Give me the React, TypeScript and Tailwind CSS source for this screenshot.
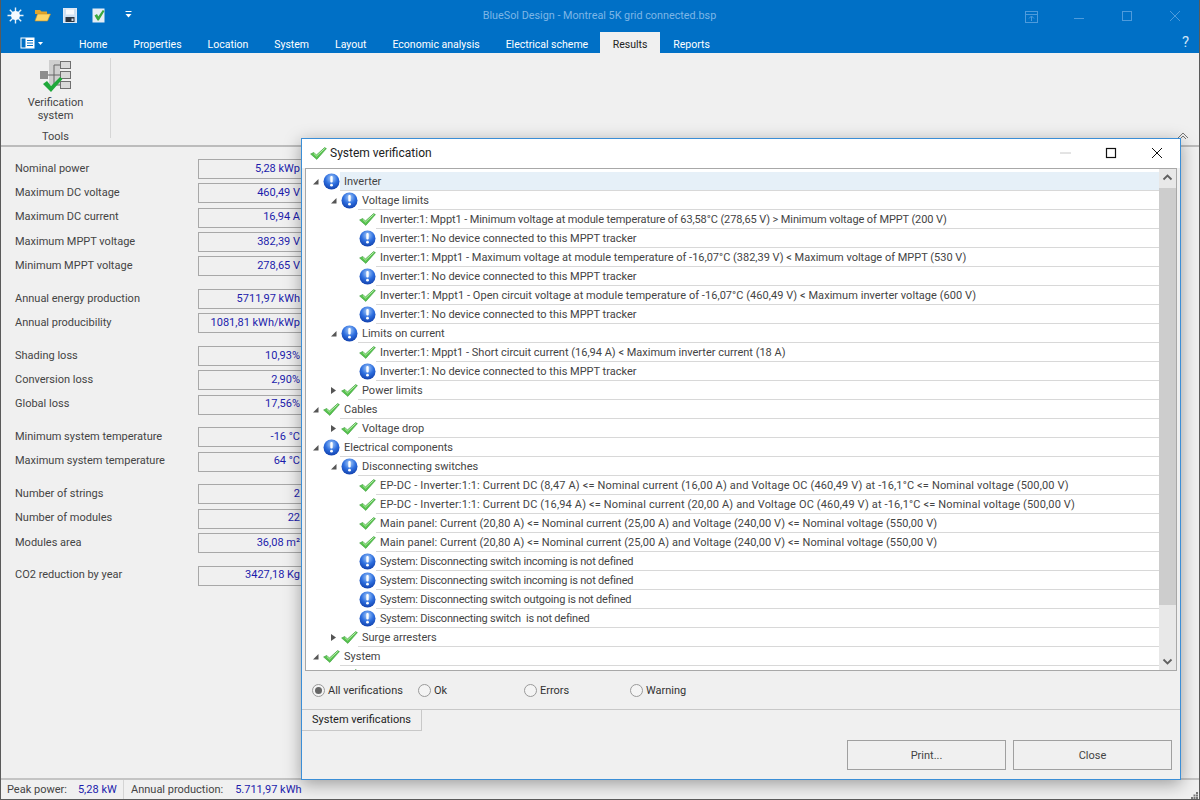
import React from 'react';

const tabs = ['Home', 'Properties', 'Location', 'System', 'Layout', 'Economic analysis', 'Electrical scheme', 'Results', 'Reports'];

const groups: [string, string][][] = [
  [['Nominal power', '5,28 kWp'], ['Maximum DC voltage', '460,49 V'], ['Maximum DC current', '16,94 A'], ['Maximum MPPT voltage', '382,39 V'], ['Minimum MPPT voltage', '278,65 V']],
  [['Annual energy production', '5711,97 kWh'], ['Annual producibility', '1081,81 kWh/kWp']],
  [['Shading loss', '10,93%'], ['Conversion loss', '2,90%'], ['Global loss', '17,56%']],
  [['Minimum system temperature', '-16 °C'], ['Maximum system temperature', '64 °C']],
  [['Number of strings', '2'], ['Number of modules', '22'], ['Modules area', '36,08 m²']],
  [['CO2 reduction by year', '3427,18 Kg']],
];

type Row = { level: number; icon: 'info' | 'ok'; text: string; arrow?: 'open' | 'closed'; active?: boolean; fit?: string };

const rows: Row[] = [
  { level: 0, icon: 'info', text: 'Inverter', arrow: 'open', active: true },
  { level: 1, icon: 'info', text: 'Voltage limits', arrow: 'open' },
  { level: 2, icon: 'ok', text: 'Inverter:1: Mppt1 - Minimum voltage at module temperature of 63,58°C (278,65 V) > Minimum voltage of MPPT (200 V)', fit: 'tracking-[-0.1px]' },
  { level: 2, icon: 'info', text: 'Inverter:1: No device connected to this MPPT tracker' },
  { level: 2, icon: 'ok', text: 'Inverter:1: Mppt1 - Maximum voltage at module temperature of -16,07°C (382,39 V) < Maximum voltage of MPPT (530 V)' },
  { level: 2, icon: 'info', text: 'Inverter:1: No device connected to this MPPT tracker' },
  { level: 2, icon: 'ok', text: 'Inverter:1: Mppt1 - Open circuit voltage at module temperature of -16,07°C (460,49 V) < Maximum inverter voltage (600 V)', fit: 'tracking-[0.05px]' },
  { level: 2, icon: 'info', text: 'Inverter:1: No device connected to this MPPT tracker' },
  { level: 1, icon: 'info', text: 'Limits on current', arrow: 'open' },
  { level: 2, icon: 'ok', text: 'Inverter:1: Mppt1 - Short circuit current (16,94 A) < Maximum inverter current (18 A)' },
  { level: 2, icon: 'info', text: 'Inverter:1: No device connected to this MPPT tracker' },
  { level: 1, icon: 'ok', text: 'Power limits', arrow: 'closed' },
  { level: 0, icon: 'ok', text: 'Cables', arrow: 'open' },
  { level: 1, icon: 'ok', text: 'Voltage drop', arrow: 'closed' },
  { level: 0, icon: 'info', text: 'Electrical components', arrow: 'open' },
  { level: 1, icon: 'info', text: 'Disconnecting switches', arrow: 'open' },
  { level: 2, icon: 'ok', text: 'EP-DC - Inverter:1:1: Current DC (8,47 A) <= Nominal current (16,00 A) and Voltage OC (460,49 V) at -16,1°C <= Nominal voltage (500,00 V)', fit: 'tracking-[0.15px]' },
  { level: 2, icon: 'ok', text: 'EP-DC - Inverter:1:1: Current DC (16,94 A) <= Nominal current (20,00 A) and Voltage OC (460,49 V) at -16,1°C <= Nominal voltage (500,00 V)', fit: 'tracking-[0.15px]' },
  { level: 2, icon: 'ok', text: 'Main panel: Current (20,80 A) <= Nominal current (25,00 A) and Voltage (240,00 V) <= Nominal voltage (550,00 V)', fit: 'tracking-[0.07px]' },
  { level: 2, icon: 'ok', text: 'Main panel: Current (20,80 A) <= Nominal current (25,00 A) and Voltage (240,00 V) <= Nominal voltage (550,00 V)', fit: 'tracking-[0.07px]' },
  { level: 2, icon: 'info', text: 'System: Disconnecting switch incoming is not defined', fit: 'tracking-[-0.2px]' },
  { level: 2, icon: 'info', text: 'System: Disconnecting switch incoming is not defined', fit: 'tracking-[-0.2px]' },
  { level: 2, icon: 'info', text: 'System: Disconnecting switch outgoing is not defined', fit: 'tracking-[-0.2px]' },
  { level: 2, icon: 'info', text: 'System: Disconnecting switch  is not defined', fit: 'tracking-[-0.2px]' },
  { level: 1, icon: 'ok', text: 'Surge arresters', arrow: 'closed' },
  { level: 0, icon: 'ok', text: 'System', arrow: 'open' },
  { level: 1, icon: 'ok', text: '', arrow: 'open' },
];

function InfoIcon({ id }: { id: string }) {
  return (
    <svg width="17" height="17" viewBox="0 0 17 17" className="shrink-0">
      <defs>
        <radialGradient id={id} cx="50%" cy="30%" r="75%">
          <stop offset="0%" stopColor="#a9cdf8" />
          <stop offset="50%" stopColor="#2f70e0" />
          <stop offset="100%" stopColor="#0d3aa6" />
        </radialGradient>
      </defs>
      <circle cx="8.5" cy="8.5" r="8" fill={`url(#${id})`} />
      <rect x="7.3" y="3" width="2.4" height="6.6" rx="1" fill="#fff" />
      <circle cx="8.5" cy="12.2" r="1.4" fill="#fff" />
    </svg>
  );
}

function CheckIcon() {
  return (
    <svg width="17" height="17" viewBox="0 0 17 17" className="shrink-0">
      <path d="M0.6 9 L3.8 7.4 L6.4 10 L14.6 2.6 L16.4 3.6 L6.8 14.4 Z" fill="#58c44e" stroke="#3c9a3e" strokeWidth="0.6" strokeLinejoin="round" />
      <path d="M3.8 8.4 L6.5 11 L14.8 3.4" fill="none" stroke="#b6ecaa" strokeWidth="1" />
    </svg>
  );
}

function TreeArrow({ kind }: { kind?: 'open' | 'closed' }) {
  if (!kind) return <span className="w-[7px] shrink-0" />;
  return (
    <svg width="7" height="9" viewBox="0 0 7 9" className="shrink-0">
      {kind === 'open' ? <path d="M6.5 2 V7.5 H1 Z" fill="#555" /> : <path d="M1 1 L6 4.5 L1 8 Z" fill="#555" />}
    </svg>
  );
}

function TreeRow({ row, index }: { row: Row; index: number }) {
  const pad = row.level === 0 ? 'pl-[6px]' : row.level === 1 ? 'pl-[24px]' : 'pl-[42px]';
  const lineFrom = row.level === 0 ? 'w-[34px]' : row.level === 1 ? 'w-[52px]' : 'w-[70px]';
  return (
    <div className="flex h-[19px] shrink-0 items-center">
      <div className={`flex h-full shrink-0 items-center ${lineFrom} ${pad}`}>
        <TreeArrow kind={row.arrow} />
        <span className="ml-[4px] flex shrink-0">{row.icon === 'info' ? <InfoIcon id={`orb${index}`} /> : <CheckIcon />}</span>
      </div>
      <div className={`flex h-full min-w-0 flex-1 items-center whitespace-pre border-b border-[#d8d8d8] pl-[4px] pt-[2px] ${row.active ? 'bg-[#e6f0f8]' : ''} ${row.fit ?? ''}`}>
        {row.text}
      </div>
    </div>
  );
}

function Radio({ label, on, width }: { label: string; on?: boolean; width: string }) {
  return (
    <div className={`flex items-center gap-[3px] ${width}`}>
      <span className="flex h-[13px] w-[13px] items-center justify-center rounded-full border border-[#9a9a9a] bg-[#f4f4f4]">
        {on && <span className="h-[7px] w-[7px] rounded-full bg-[#666]" />}
      </span>
      <span className="pt-[2px]">{label}</span>
    </div>
  );
}

function Toolbar() {
  return (
    <div className="flex h-[32px] items-center pb-[2px] pl-[6px]">
      <svg width="17" height="17" viewBox="0 0 17 17">
        <g stroke="#e8f2fb" strokeWidth="1.4">
          <path d="M8.5 0.5V16.5M0.5 8.5H16.5M2.8 2.8L14.2 14.2M14.2 2.8L2.8 14.2" />
        </g>
        <circle cx="8.5" cy="8.5" r="4.5" fill="#f6fafe" />
      </svg>
      <svg width="17" height="14" viewBox="0 0 17 14" className="ml-[10px]">
        <path d="M1 2 H6 L7.5 3.5 H13 V6 H1 Z" fill="#e0a52c" />
        <path d="M1 13 L3.5 6 H16.5 L13.5 13 Z" fill="#fcd667" stroke="#c98f20" strokeWidth="0.6" />
      </svg>
      <svg width="14" height="15" viewBox="0 0 14 15" className="ml-[12px]">
        <rect x="0.5" y="0.5" width="13" height="14" fill="#cfe0f2" stroke="#dfe9f5" />
        <rect x="3" y="1.5" width="8" height="5" fill="#f7f9fc" />
        <rect x="2.5" y="9" width="9" height="5" fill="#2d3540" />
        <rect x="8.5" y="10.5" width="2" height="2.5" fill="#cfd8e3" />
      </svg>
      <svg width="14" height="15" viewBox="0 0 14 15" className="ml-[15px]">
        <rect x="0.5" y="0.5" width="12" height="14" fill="#e4edf5" />
        <path d="M2.5 7.5 L5 6 L6.3 8.5 L10.8 2 L12.5 3 L6.8 12.5 L5.5 12.5 Z" fill="#38a83f" />
      </svg>
      <svg width="7" height="8" viewBox="0 0 7 8" className="ml-[19px]">
        <path d="M0.5 0.5H6.5" stroke="#fff" />
        <path d="M0.5 3H6.5L3.5 6.5Z" fill="#fff" />
      </svg>
    </div>
  );
}

function WindowTitle() {
  return (
    <>
      <div className="absolute left-0 top-0 flex h-[32px] w-full items-center justify-center pr-[1px] pt-[1px] text-[10.8px] text-[#7db6e6]">
        BlueSol Design - Montreal 5K grid connected.bsp
      </div>
      <div className="absolute right-0 top-0 flex h-[32px] items-center">
        <svg width="200" height="32" viewBox="0 0 200 32" fill="none" stroke="#4e9bdc">
          <rect x="26.5" y="11.5" width="12" height="11" />
          <path d="M26.5 14.5H38.5M32.5 21V16.5M30 18.5L32.5 16L35 18.5" />
          <path d="M75 18.5H85" />
          <rect x="123.5" y="11.5" width="9" height="9" />
          <path d="M171 11L181 21M181 11L171 21" />
        </svg>
      </div>
    </>
  );
}

function Dialog() {
  return (
    <div className="absolute left-[300px] top-[138px] flex h-[642px] w-[880px] flex-col border border-[#3b8ed6] bg-[#f0f0f0] shadow-[0_4px_16px_rgba(0,0,0,0.35)]">
      <div className="flex h-[29px] shrink-0 items-center bg-white pb-[1px] pl-[8px] text-[12px] text-[#222]">
        <CheckIcon />
        <span className="ml-[3px]">System verification</span>
        <svg width="120" height="16" viewBox="0 0 120 16" fill="none" className="ml-auto">
          <path d="M0 8H11" stroke="#c8c8c8" />
          <rect x="46.5" y="3.5" width="9" height="9" stroke="#111" strokeWidth="1.2" />
          <path d="M92 3L102 13M102 3L92 13" stroke="#111" />
        </svg>
      </div>
      <div className="mx-[3px] flex h-[503px] shrink-0 border border-[#a8a8a8] bg-white">
        <div className="flex min-w-0 flex-1 flex-col overflow-hidden pt-[3px]">
          {rows.map((row, i) => (
            <TreeRow key={i} row={row} index={i} />
          ))}
        </div>
        <div className="relative w-[17px] shrink-0 bg-[#e8e8e8]">
          <div className="absolute inset-x-0 top-[19px] h-[417px] bg-[#cdcdcd]" />
          <svg width="17" height="17" viewBox="0 0 17 17" className="absolute left-0 top-0" fill="none" stroke="#606060" strokeWidth="1.8">
            <path d="M4.5 10.5L8.5 6.5L12.5 10.5" />
          </svg>
          <svg width="17" height="17" viewBox="0 0 17 17" className="absolute bottom-0 left-0" fill="none" stroke="#606060" strokeWidth="1.8">
            <path d="M4.5 6.5L8.5 10.5L12.5 6.5" />
          </svg>
        </div>
      </div>
      <div className="flex h-[38px] shrink-0 items-center pl-[10px] text-[#333]">
        <Radio label="All verifications" on width="w-[106px]" />
        <Radio label="Ok" width="w-[106px]" />
        <Radio label="Errors" width="w-[106px]" />
        <Radio label="Warning" width="w-[106px]" />
      </div>
      <div className="flex h-[22px] shrink-0">
        <div className="flex w-[120px] items-center justify-center border-r border-t border-b border-[#c8c8c8] bg-[#f0f0f0] text-[#222]">System verifications</div>
        <div className="flex-1 border-t border-[#c8c8c8]" />
      </div>
      <div className="flex flex-1 items-start justify-end gap-[7px] pr-[8px] pt-[9px] text-[#444]">
        <div className="flex h-[30px] w-[159px] items-center justify-center border border-[#a0a0a0] pt-[2px]">Print...</div>
        <div className="flex h-[30px] w-[159px] items-center justify-center border border-[#a0a0a0] pt-[2px]">Close</div>
      </div>
    </div>
  );
}

export default function App() {
  return (
    <div className="relative flex h-[800px] w-[1200px] flex-col overflow-hidden border-x border-b border-[#5a5a5a] bg-[#f0f0f0] font-['Roboto',sans-serif] text-[11px] text-[#444]">
      <div className="relative h-[53px] shrink-0 bg-[#0070c6] text-white">
        <Toolbar />
        <WindowTitle />
        <div className="flex h-[21px] items-center">
          <svg width="24" height="13" viewBox="0 0 24 13" className="ml-[19px] mt-[1px]">
            <rect x="0.5" y="0.5" width="14" height="11" fill="#fff" />
            <rect x="1.5" y="1.5" width="4" height="9" fill="#0070c6" />
            <path d="M7 3.5H13M7 6H13M7 8.5H13" stroke="#0070c6" />
            <path d="M18 5H23L20.5 8Z" fill="#fff" />
          </svg>
          <div className="ml-[22px] flex h-full items-stretch text-[10.5px]">
            {tabs.map((t) => (
              <div key={t} className={t === 'Results' ? 'ml-[-1.5px] flex items-center bg-[#f0f0f0] px-[13px] pt-[5px] text-[#222]' : 'flex items-center px-[13px] pt-[5px]'}>
                {t}
              </div>
            ))}
          </div>
        </div>
        <span className="absolute right-[10px] top-[32px] text-[15px] leading-[20px] text-[#cfe4f6]">?</span>
      </div>

      <div className="relative flex h-[94px] shrink-0 border-b-2 border-[#bcbcbc] pl-[1px]">
        <div className="mt-[5px] flex h-[80px] w-[109px] flex-col items-center border-r border-[#d6d6d6] pr-[1px]">
          <svg width="34" height="34" viewBox="0 0 34 34" className="mt-[1px] shrink-0">
            <rect x="10" y="1" width="11" height="25" fill="#cfcfcf" />
            <g fill="#d9d9d9" stroke="#6f6f6f">
              <rect x="21.5" y="2.5" width="10" height="7" />
              <rect x="21.5" y="12.5" width="10" height="7" />
              <rect x="21.5" y="22.5" width="10" height="7" />
            </g>
            <rect x="1" y="12" width="8" height="8" fill="#8d8d8d" />
            <path d="M9 16H21M15 6V26H21M15 6H21" stroke="#666" fill="none" />
            <path d="M4 25L8 22L12 27L21 18L23.5 20L12 33Z" fill="#1fa83a" />
          </svg>
          <div className="mt-[3px] shrink-0 text-center leading-[13px]">Verification<br />system</div>
          <div className="mt-[7px] shrink-0">Tools</div>
        </div>
        <svg width="12" height="9" viewBox="0 0 12 9" className="absolute bottom-[5px] right-[10px]" fill="none" stroke="#777">
          <path d="M1 7L6 2L11 7" />
          <path d="M3 8L6 5L9 8" />
        </svg>
      </div>

      <div className="flex min-h-0 flex-1 flex-col gap-[8.4px] pl-[14px] pt-[10px]">
        {groups.map((g, i) => (
          <div key={i} className="flex flex-col">
            {g.map(([label, value]) => (
              <div key={label} className="flex h-[24.3px] items-center">
                <span className="w-[183px] shrink-0">{label}</span>
                <span className="flex h-[20px] w-[106px] shrink-0 items-center justify-end whitespace-nowrap border border-[#a8a8a8] pr-[3px] text-[#1c1cac]">{value}</span>
              </div>
            ))}
          </div>
        ))}
      </div>

      <div className="flex h-[21px] shrink-0 items-stretch whitespace-nowrap border-t-2 border-[#c4c4c4]">
        <div className="flex w-[123px] items-center border-r border-[#d4d4d4] pl-[6px] pt-[2px]">
          <span>Peak power:</span>
          <span className="ml-[11px] text-[#1c1cac]">5,28 kW</span>
        </div>
        <div className="flex items-center pl-[7px] pt-[2px]">
          <span>Annual production:</span>
          <span className="ml-[12px] text-[#1c1cac]">5.711,97 kWh</span>
        </div>
        <svg width="7" height="7" viewBox="0 0 7 7" className="ml-auto mr-[1px] self-end" fill="#777">
          <rect x="5" y="0" width="2" height="2" />
          <rect x="2.5" y="2.5" width="2" height="2" />
          <rect x="5" y="2.5" width="2" height="2" />
          <rect x="0" y="5" width="2" height="2" />
          <rect x="2.5" y="5" width="2" height="2" />
          <rect x="5" y="5" width="2" height="2" />
        </svg>
      </div>

      <Dialog />
    </div>
  );
}
